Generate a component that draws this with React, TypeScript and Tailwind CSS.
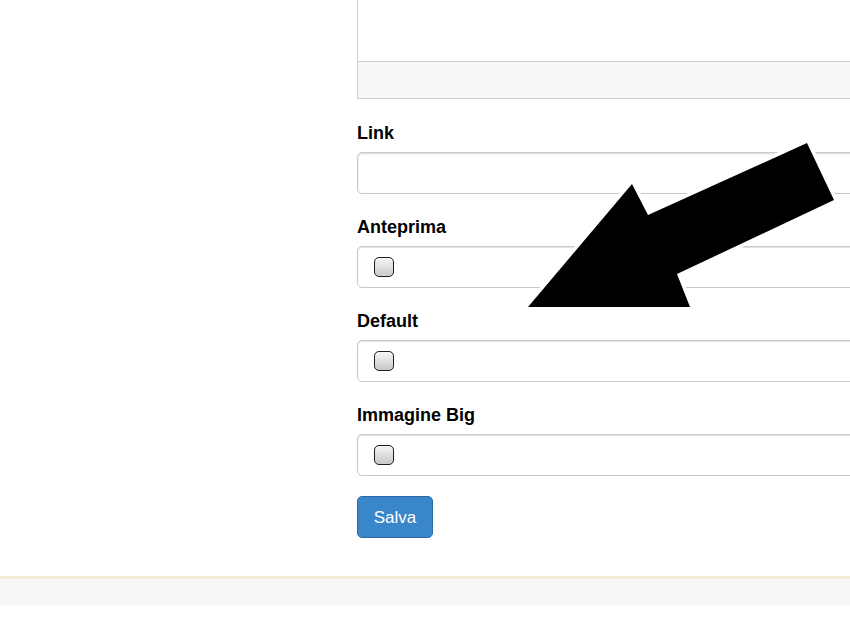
import React from "react";

function CheckField({ label }: { label: string }) {
  return (
    <div className="mt-[23px]">
      <div className="text-[18px] leading-[20px] font-bold text-black">{label}</div>
      <div className="mt-[9px] h-[42px] w-[520px] rounded-[5px] border border-[#c8c8c8] shadow-[inset_0_1px_1px_rgba(0,0,0,0.12)] bg-white flex items-center pl-[16px]">
        <div className="w-5 h-5 rounded-[5px] border-[1.5px] border-[#1e1e1e] bg-linear-to-b from-[#f6f6f6] to-[#c9c9c9]" />
      </div>
    </div>
  );
}

export default function App() {
  return (
    <div
      className="relative w-[850px] h-[637px] overflow-hidden bg-white"
      style={{ fontFamily: '"Liberation Sans", Arial, sans-serif' }}
    >
      <div className="pl-[357px]">
        {/* editor box */}
        <div className="w-[520px] border-l border-b border-r border-[#cfcfcf]">
          <div className="h-[62px] bg-white border-b border-[#cfcfcf]" />
          <div className="h-[36px] bg-[#f7f7f7]" />
        </div>

        <div className="pt-[24px]">
          <div className="text-[18px] leading-[20px] font-bold text-black">Link</div>
          <div className="mt-[9px] h-[42px] w-[520px] rounded-[5px] border border-[#c8c8c8] shadow-[inset_0_1px_2px_rgba(0,0,0,0.15)] bg-white" />
        </div>

        <CheckField label="Anteprima" />
        <CheckField label="Default" />
        <CheckField label="Immagine Big" />

        <button className="mt-5 h-[42px] w-[76px] rounded-[5px] border border-[#2b6aa6] bg-[#3a86cb] text-white text-[17px] leading-none">
          Salva
        </button>
      </div>

      {/* footer */}
      <div className="mt-[38px] border-t-[3px] border-[#f3ead9] bg-[#f6f6f6] h-[29px]" />

      {/* arrow overlay */}
      <svg className="absolute left-0 top-0 pointer-events-none" width="850" height="637" viewBox="0 0 850 637">
        <polygon
          points="528,307 632,184 648,215 807,143 834,200 677,274 690,307"
          fill="#fff"
          stroke="#fff"
          strokeWidth="7"
          strokeLinejoin="round"
        />
        <polygon
          points="528,307 632,184 648,215 807,143 834,200 677,274 690,307"
          fill="#000"
        />
      </svg>
    </div>
  );
}
